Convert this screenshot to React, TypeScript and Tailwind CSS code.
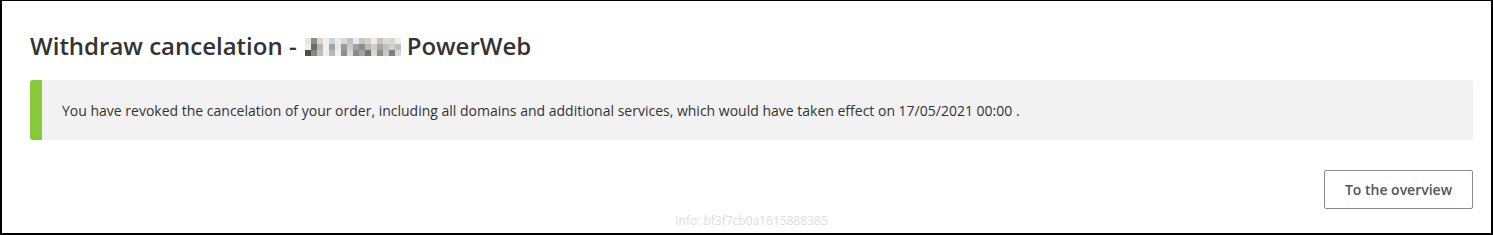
import React from "react";

// pixelated (censored) account number in the title
const blurRows = [
  ["#e8e4df", "#8e8a86", "#d9d6d2", "#f0efed", "#cfd3d8", "#ecebea", "#d8d8d8", "#bfc3c8", "#e9e9e9", "#c9c5c0", "#d4d0cc", "#ececec", "#c7c4c1", "#dedcda", "#d6d6d6", "#eeeeee"],
  ["#f2ede6", "#6d6a66", "#b9b4ae", "#f4f2ef", "#9ea4ab", "#e6e6e6", "#9a9a9a", "#c5cbd2", "#a3a09c", "#8f8b86", "#bdb9b4", "#d0ccc8", "#a9a6a2", "#c2bfbc", "#cfcfcf", "#bdbdbd"],
  ["#4f4d4b", "#8a8784", "#c3bfba", "#f1efec", "#b2b8bf", "#efefef", "#8e8e8e", "#d5dadf", "#8c8986", "#a6a29e", "#767370", "#dad6d2", "#8f8c89", "#c9c6c3", "#7e7e7e", "#d8d8d8"],
];

function Blurred() {
  return (
    <span className="inline-flex flex-col mt-[2px] ml-[8px] mr-[6px]">
      {blurRows.map((row, i) => (
        <span key={i} className="flex">
          {row.map((c, j) => (
            <span key={j} className="block w-[6px] h-[6px]" style={{ backgroundColor: c }} />
          ))}
        </span>
      ))}
    </span>
  );
}

export default function App() {
  return (
    <div className="w-[1493px] h-[235px] bg-white" style={{ fontFamily: '"Open Sans", sans-serif' }}>
      <div className="h-[235px] w-[1493px] border-t border-l-2 border-r-2 border-b-2 border-black pl-[28px] pr-[18px]">
        {/* title */}
        <h1 className="pt-[30px] text-[24px] leading-[30px] font-semibold text-[#333333] flex items-center">
          Withdraw cancelation -<Blurred />PowerWeb
        </h1>

        {/* success notice */}
        <div className="mt-[19px] h-[60px] flex items-center bg-[#f2f2f2] border-l-[12px] border-[#88c93a] rounded-[3px] pl-[20px]">
          <p className="text-[14px] text-[#333333]">
            You have revoked the cancelation of your order, including all domains and additional services, which would
            have taken effect on 17/05/2021 00:00 .
          </p>
        </div>

        <div className="mt-[30px] flex justify-end">
          <button className="w-[149px] h-[39px] border border-[#8a8a8a] rounded-[2px] bg-white text-[14px] font-semibold text-[#555555]">
            To the overview
          </button>
        </div>

        <div className="mt-[4px] text-center text-[12px] leading-[16px] text-[#dddddd]">Info: bf3f7cb0a1615888385</div>
      </div>
    </div>
  );
}
